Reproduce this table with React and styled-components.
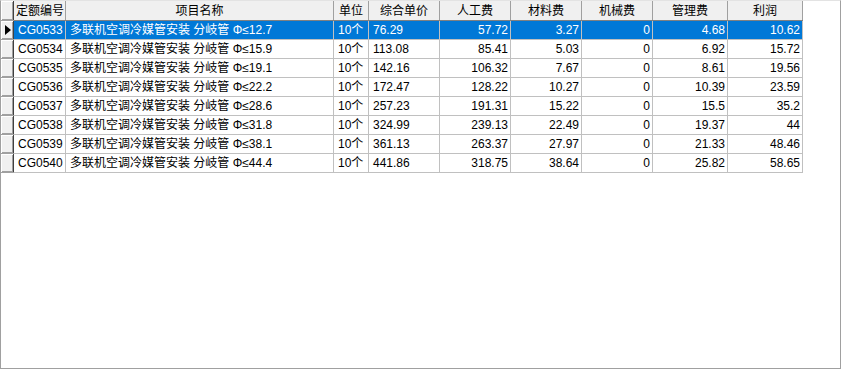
import styled, { createGlobalStyle } from "styled-components";

const GlobalStyle = createGlobalStyle`
  body {
    margin: 0;
    padding: 0;
    background: #ffffff;
  }
`;

const Frame = styled.div`
  box-sizing: border-box;
  width: 841px;
  height: 369px;
  border: 1px solid #a0a0a0;
  border-top-color: #e3e3e3;
  background: #ffffff;
  overflow: hidden;
`;

const Grid = styled.table`
  border-collapse: collapse;
  table-layout: fixed;
  width: 802px;
  margin: -1px 0 0 -1px;
  font-family: "Liberation Sans", "Noto Sans CJK SC", sans-serif;
  font-size: 12px;
  color: #000000;
`;

const HeadCell = styled.th`
  height: 19px;
  padding: 0 2px;
  font-weight: normal;
  text-align: center;
  white-space: nowrap;
  overflow: hidden;
  background: #f0f0f0;
  border: 1px solid #a0a0a0;
  border-top-color: #e3e3e3;
  border-bottom-color: #808080;
  line-height: 18px;
`;

const Indicator = styled.td`
  padding: 0;
  background: #f0f0f0;
  border: 1px solid #a0a0a0;
  border-right: 1px solid #404040;
  box-shadow: inset 1px 1px 0 #ffffff, inset -1px -1px 0 #a0a0a0;
  vertical-align: middle;
`;

const Arrow = styled.span`
  display: block;
  width: 0;
  height: 0;
  margin-left: 4px;
  border-top: 5px solid transparent;
  border-bottom: 5px solid transparent;
  border-left: 6px solid #000000;
`;

const Cell = styled.td`
  height: 18px;
  padding: 0 ${(p) => (p.$right ? "2px" : "3px")} 0 ${(p) => (p.$right ? "2px" : "4px")};
  text-align: ${(p) => (p.$right ? "right" : "left")};
  white-space: nowrap;
  overflow: hidden;
  border: 1px solid #c0c0c0;
  line-height: 17px;
  background: ${(p) => (p.$selected ? "#0078d7" : "#ffffff")};
  color: ${(p) => (p.$selected ? "#ffffff" : "#000000")};
`;

const columns = [
  { title: "定额编号", width: 52 },
  { title: "项目名称", width: 268 },
  { title: "单位", width: 35 },
  { title: "综合单价", width: 71 },
  { title: "人工费", width: 71, right: true },
  { title: "材料费", width: 71, right: true },
  { title: "机械费", width: 71, right: true },
  { title: "管理费", width: 75, right: true },
  { title: "利润", width: 75, right: true },
];

const rows = [
  ["CG0533", "Φ≤12.7", "76.29", "57.72", "3.27", "0", "4.68", "10.62"],
  ["CG0534", "Φ≤15.9", "113.08", "85.41", "5.03", "0", "6.92", "15.72"],
  ["CG0535", "Φ≤19.1", "142.16", "106.32", "7.67", "0", "8.61", "19.56"],
  ["CG0536", "Φ≤22.2", "172.47", "128.22", "10.27", "0", "10.39", "23.59"],
  ["CG0537", "Φ≤28.6", "257.23", "191.31", "15.22", "0", "15.5", "35.2"],
  ["CG0538", "Φ≤31.8", "324.99", "239.13", "22.49", "0", "19.37", "44"],
  ["CG0539", "Φ≤38.1", "361.13", "263.37", "27.97", "0", "21.33", "48.46"],
  ["CG0540", "Φ≤44.4", "441.86", "318.75", "38.64", "0", "25.82", "58.65"],
];

const App = () => {
  return (
    <>
      <GlobalStyle />
      <Frame>
        <Grid>
          <colgroup>
            <col style={{ width: 13 }} />
            {columns.map((c) => (
              <col key={c.title} style={{ width: c.width }} />
            ))}
          </colgroup>
          <thead>
            <tr>
              <Indicator as="th" />
              {columns.map((c) => (
                <HeadCell key={c.title}>{c.title}</HeadCell>
              ))}
            </tr>
          </thead>
          <tbody>
            {rows.map((r, i) => {
              const sel = i === 0;
              const values = [
                r[0],
                "多联机空调冷媒管安装 分岐管 " + r[1],
                "10个",
                r[2],
                r[3],
                r[4],
                r[5],
                r[6],
                r[7],
              ];
              return (
                <tr key={r[0]}>
                  <Indicator>{sel && <Arrow />}</Indicator>
                  {values.map((v, j) => (
                    <Cell key={j} $selected={sel} $right={columns[j].right}>
                      {v}
                    </Cell>
                  ))}
                </tr>
              );
            })}
          </tbody>
        </Grid>
      </Frame>
    </>
  );
};

export default App;
